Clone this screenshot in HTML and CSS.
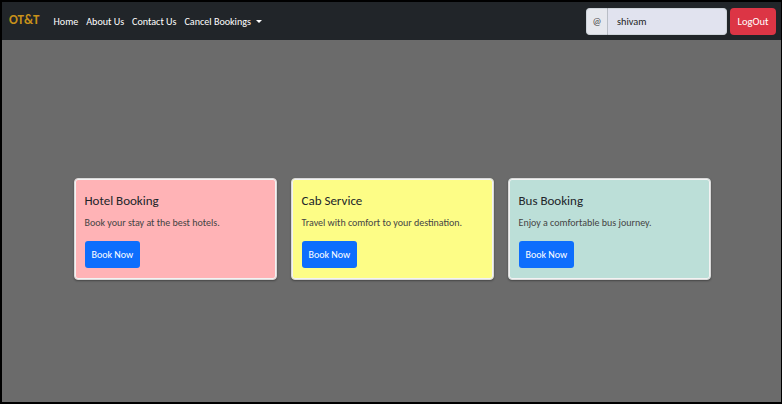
FILE: index.html
```html
<!DOCTYPE html>
<html lang="en">
<head>
<meta charset="utf-8">
<title>OT&amp;T</title>
<link rel="stylesheet" href="styles.css">
</head>
<body>
<div class="frame">
  <nav class="navbar">
    <a class="brand" href="#">OT&amp;T</a>
    <ul class="nav-links">
      <li><a href="#">Home</a></li>
      <li><a href="#">About Us</a></li>
      <li><a href="#">Contact Us</a></li>
      <li><a href="#" class="dropdown">Cancel Bookings<span class="caret"></span></a></li>
    </ul>
    <div class="nav-right">
      <div class="input-group">
        <span class="addon">@</span>
        <input class="user-input" type="text" value="shivam">
      </div>
      <button class="btn-logout">LogOut</button>
    </div>
  </nav>
  <main class="content">
    <div class="cards">
      <div class="card card-pink">
        <h5 class="card-title">Hotel Booking</h5>
        <p class="card-text">Book your stay at the best hotels.</p>
        <a class="btn-book" href="#">Book Now</a>
      </div>
      <div class="card card-yellow">
        <h5 class="card-title">Cab Service</h5>
        <p class="card-text">Travel with comfort to your destination.</p>
        <a class="btn-book" href="#">Book Now</a>
      </div>
      <div class="card card-teal">
        <h5 class="card-title">Bus Booking</h5>
        <p class="card-text">Enjoy a comfortable bus journey.</p>
        <a class="btn-book" href="#">Book Now</a>
      </div>
    </div>
  </main>
</div>
</body>
</html>
```
FILE: styles.css
```css
* { box-sizing: border-box; }
html, body { margin: 0; padding: 0; }
body {
  font-family: "Carlito", "Lato", "Open Sans", sans-serif;
  background: #000;
}
.frame {
  width: 782px;
  height: 404px;
  border-top: 2px solid #000;
  border-left: 2px solid #000;
  border-right: 1px solid #000;
  border-bottom: 2px solid #000;
  background: #6b6b6b;
  display: flex;
  flex-direction: column;
}
.navbar {
  height: 38px;
  background: #212529;
  display: flex;
  align-items: center;
  padding: 0 5px 0 7px;
  flex-shrink: 0;
}
.brand {
  color: #c8911a;
  font-weight: 700;
  font-size: 13px;
  text-decoration: none;
  margin-right: 14px;
  margin-bottom: 3px;
}
.nav-links {
  list-style: none;
  margin: 0 0 3px;
  padding: 0;
  display: flex;
  gap: 8px;
}
.nav-links a {
  color: #fff;
  text-decoration: none;
  font-size: 10.1px;
}
.caret {
  display: inline-block;
  margin-left: 5px;
  vertical-align: 2px;
  border-top: 3px solid #fff;
  border-left: 3px solid transparent;
  border-right: 3px solid transparent;
}
.nav-right {
  margin-left: auto;
  display: flex;
  align-items: center;
  gap: 3px;
}
.input-group {
  display: flex;
  height: 27px;
  width: 141px;
}
.addon {
  width: 22px;
  display: flex;
  align-items: center;
  justify-content: center;
  background: #e6e8ee;
  border: 1px solid #ced4da;
  border-right: 1px solid #b9bec6;
  border-radius: 4px 0 0 4px;
  font-size: 10px;
  color: #444;
}
.user-input {
  flex: 1;
  min-width: 0;
  border: 1px solid #ced4da;
  border-left: none;
  border-radius: 0 4px 4px 0;
  background: #e1e3ef;
  font-family: inherit;
  font-size: 10.3px;
  color: #222;
  padding: 0 8px 0 9px;
  outline: none;
}
.btn-logout {
  height: 27px;
  width: 46px;
  border: none;
  border-radius: 4px;
  background: #dc3545;
  color: #fff;
  font-family: inherit;
  font-size: 10.5px;
  padding: 0;
}
.content {
  flex: 1;
  display: flex;
  justify-content: center;
  padding-top: 138px;
  padding-left: 1px;
}
.cards {
  display: flex;
  gap: 14px;
  align-items: flex-start;
}
.card {
  width: 203px;
  height: 102px;
  padding: 10px 10px;
  border: 1px solid #d9d9d9;
  border-radius: 4px;
  box-shadow: inset 0 0 0 1px #f3f3f3, 0 1px 2px rgba(0,0,0,0.35);
}
.card-pink { background: #ffb3b6; }
.card-yellow { background: #fdfd86; }
.card-teal { background: #bcdfd8; }
.card-title {
  margin: 3px 0 6px;
  font-size: 13px;
  font-weight: 400;
  color: #212529;
  line-height: 17px;
}
.card-text {
  margin: 0 0 10px;
  font-size: 10px;
  line-height: 16px;
  color: #444;
}
.btn-book {
  display: inline-flex;
  align-items: center;
  height: 27px;
  padding: 0 7px;
  background: #0d6efd;
  color: #fff;
  text-decoration: none;
  font-size: 10px;
  border-radius: 3px;
}
```
